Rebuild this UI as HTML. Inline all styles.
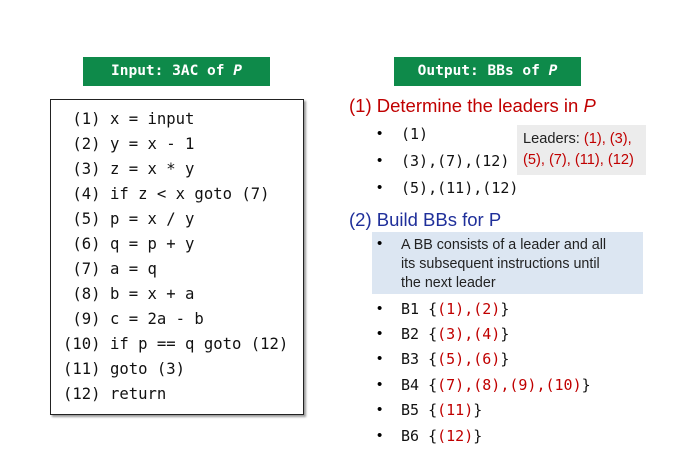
<!DOCTYPE html>
<html><head><style>
body{margin:0;width:683px;height:460px;background:#fff;position:relative;overflow:hidden;font-family:"Liberation Sans",sans-serif}
.g{position:absolute;top:57px;height:29px;width:187px;background:#0e8a4a;color:#fff;font:bold 14.5px "DejaVu Sans Mono","Liberation Mono",monospace;text-align:center;line-height:29px}
.box{position:absolute;left:50px;top:99px;width:252px;height:314px;border:1.5px solid #222;box-shadow:2px 2px 2px #999}
.code{position:absolute;font:15.6px "DejaVu Sans Mono","Liberation Mono",monospace;color:#111;white-space:pre;line-height:25px}
.m{font-family:"DejaVu Sans Mono","Liberation Mono",monospace;font-size:15px;color:#111}
.a{position:absolute;white-space:pre}
.b{position:absolute;left:377px;font-size:15px}
.r{color:#c00000}
</style></head><body>
<div class="g" style="left:83px">Input: 3AC of <i>P</i></div>
<div class="g" style="left:394px">Output: BBs of <i>P</i></div>
<div class="box"></div>
<div class="code" style="left:63px;top:107px"> (1) x = input
 (2) y = x - 1
 (3) z = x * y
 (4) if z &lt; x goto (7)
 (5) p = x / y
 (6) q = p + y
 (7) a = q
 (8) b = x + a
 (9) c = 2a - b
(10) if p == q goto (12)
(11) goto (3)
(12) return</div>
<div class="a" style="left:349px;top:95px;font-size:18.5px;color:#c00000">(1) Determine the leaders in <i>P</i></div>
<div style="position:absolute;left:517px;top:125px;width:129px;height:50px;background:#ececec"></div>
<div class="a" style="left:523px;top:129px;font-size:14.6px;color:#222;line-height:21px">Leaders: <span class="r">(1), (3),</span><br><span class="r">(5), (7), (11), (12)</span></div>
<div class="b" style="top:125px">•</div><div class="a m" style="left:401px;top:125px">(1)</div>
<div class="b" style="top:152px">•</div><div class="a m" style="left:401px;top:152px">(3),(7),(12)</div>
<div class="b" style="top:179px">•</div><div class="a m" style="left:401px;top:179px">(5),(11),(12)</div>
<div class="a" style="left:349px;top:209px;font-size:18.5px;color:#1f2f9a">(2) Build BBs for P</div>
<div style="position:absolute;left:372px;top:232px;width:271px;height:62px;background:#dce6f2"></div>
<div class="b" style="top:235px">•</div>
<div class="a" style="left:401px;top:236px;font-size:14.3px;color:#222;line-height:19px">A BB consists of a leader and all<br>its subsequent instructions until<br>the next leader</div>
<div class="b" style="top:300px">•</div><div class="a m" style="left:401px;top:300px">B1 {<span class="r">(1),(2)</span>}</div>
<div class="b" style="top:325px">•</div><div class="a m" style="left:401px;top:325px">B2 {<span class="r">(3),(4)</span>}</div>
<div class="b" style="top:350px">•</div><div class="a m" style="left:401px;top:350px">B3 {<span class="r">(5),(6)</span>}</div>
<div class="b" style="top:376px">•</div><div class="a m" style="left:401px;top:376px">B4 {<span class="r">(7),(8),(9),(10)</span>}</div>
<div class="b" style="top:401px">•</div><div class="a m" style="left:401px;top:401px">B5 {<span class="r">(11)</span>}</div>
<div class="b" style="top:427px">•</div><div class="a m" style="left:401px;top:427px">B6 {<span class="r">(12)</span>}</div>
</body></html>
